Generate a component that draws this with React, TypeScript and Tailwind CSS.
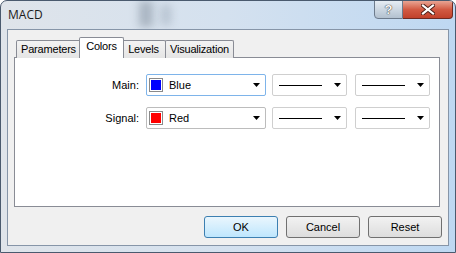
import React from "react";

const Arrow = () => (
    <svg width="7" height="4" viewBox="0 0 7 4" className="block">
        <path d="M0 0H7L3.5 4Z" fill="#000" />
    </svg>
);

interface ColorComboProps {
    color: string;
    name: string;
    focused?: boolean;
}

const ColorCombo = ({color, name, focused}: ColorComboProps) => (
    <div
        className={
            "flex items-center w-[120px] h-[22px] bg-white border rounded-[2px] pl-[2px] pr-[5px] " +
            (focused ? "border-[#7eb4ea]" : "border-[#bcbcbc]")
        }
    >
        <div className="w-[14px] h-[14px] border border-[#8a8a8a] p-[1px] bg-white">
            <div className="w-full h-full" style={{backgroundColor: color}} />
        </div>
        <span className="ml-[6px] flex-1 text-[11px] text-black">{name}</span>
        <Arrow />
    </div>
);

const LineCombo = () => (
    <div className="flex items-center w-[75px] h-[22px] bg-white border border-[#cfcfcf] rounded-[2px] pl-[6px] pr-[5px]">
        <div className="w-[43px] h-px bg-black" />
        <div className="flex-1" />
        <Arrow />
    </div>
);

const Row = ({label, color, name, focused}: {label: string; color: string; name: string; focused?: boolean}) => (
    <div className="flex items-center">
        <div className="w-[131px] text-right text-[11px] text-black pr-[7px]">{label}</div>
        <ColorCombo color={color} name={name} focused={focused} />
        <div className="ml-[6px]"><LineCombo /></div>
        <div className="ml-[8px]"><LineCombo /></div>
    </div>
);

const tabs = [
    {t: "Parameters", w: "w-[65px]"},
    {t: "Colors", w: "w-[45px]"},
    {t: "Levels", w: "w-[45px]"},
    {t: "Visualization", w: "w-[69px]"},
];

const Button = ({label, primary}: {label: string; primary?: boolean}) => (
    <button
        className={
            "w-[74px] h-[22px] rounded-[3px] border text-[11px] text-black bg-gradient-to-b " +
            (primary
                ? "border-[#3c7fb1] from-[#eaf6fd] to-[#bee6fd]"
                : "border-[#707070] from-[#f2f2f2] to-[#dddddd]")
        }
    >
        {label}
    </button>
);

export default function App() {
    return (
        <div
            className="relative w-[456px] h-[253px] overflow-hidden rounded-t-[7px] border border-[#4a5a6e] bg-gradient-to-r from-[#dfe4ea] via-[#d4e1ef] to-[#bed8f2]"
            style={{fontFamily: '"Liberation Sans", Arial, sans-serif'}}
        >
            <div className="absolute left-[138px] top-0 w-[14px] h-[26px] bg-[#7d8a98] blur-[4px] opacity-50" />
            <div className="absolute left-[160px] top-[4px] w-[10px] h-[20px] bg-[#8896a6] blur-[4px] opacity-40" />

            {/* title bar */}
            <div className="relative flex h-[28px] justify-between">
                <div className="pl-[7px] pt-[5px] text-[12px] text-[#1b1b1b]" style={{fontFamily: '"Open Sans", "Noto Sans", sans-serif'}}>
                    MACD
                </div>
                <div className="flex mr-[2px] h-[19px] -mt-px">
                    <div className="w-[29px] h-full rounded-bl-[4px] border border-[#6d7b8c] bg-gradient-to-b from-[#e6edf4] via-[#ccd7e2] to-[#b3c1cf] flex items-center justify-center text-[13px] font-bold text-[#f8f8f8]" style={{textShadow: "0 0 1px #333, 0 0 1px #333"}}>
                        ?
                    </div>
                    <div className="w-[50px] h-full rounded-br-[4px] border border-l-0 border-[#6f2a22] bg-gradient-to-b from-[#e8a493] via-[#d25a43] to-[#c1412b] flex items-center justify-center">
                        <svg width="14" height="11" viewBox="0 0 14 11">
                            <path d="M2 1.5L12 9.5M12 1.5L2 9.5" stroke="#4a1d16" strokeWidth="4" strokeLinecap="square" />
                            <path d="M2 1.5L12 9.5M12 1.5L2 9.5" stroke="#fff" strokeWidth="2.2" strokeLinecap="square" />
                        </svg>
                    </div>
                </div>
            </div>

            {/* client area */}
            <div className="relative mx-[6px] h-[217px] border border-[#8695a8] bg-[#f0f0f0] px-[6px] pt-[7px]">
                <div className="flex items-end h-[21px] pl-[2px]">
                    {tabs.map(({t, w}) => {
                        const sel = t === "Colors";
                        return (
                            <div
                                key={t}
                                className={
                                    "relative text-[11px] tracking-[-0.2px] text-black border border-[#898c95] border-b-0 rounded-t-[2px] flex items-center justify-center " +
                                    w +
                                    (sel
                                        ? " h-[21px] bg-white z-10 -mx-[2px] pb-[3px]"
                                        : " h-[18px] bg-gradient-to-b from-[#f3f3f3] to-[#e5e5e5] -ml-px first:ml-0")
                                }
                            >
                                {t}
                            </div>
                        );
                    })}
                </div>
                <div className="-mt-px h-[150px] w-[426px] border border-[#898c95] bg-white pt-[16px] flex flex-col gap-[11px]">
                    <Row label="Main:" color="#0000ff" name="Blue" focused />
                    <Row label="Signal:" color="#ff0000" name="Red" />
                </div>
                <div className="flex justify-end gap-[8px] mt-[9px]">
                    <Button label="OK" primary />
                    <Button label="Cancel" />
                    <Button label="Reset" />
                </div>
            </div>
        </div>
    );
}
